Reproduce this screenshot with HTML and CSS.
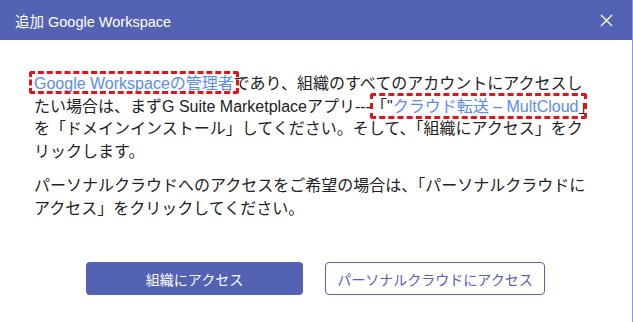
FILE: index.html
```html
<!DOCTYPE html>
<html lang="ja">
<head>
    <meta charset="UTF-8">
    <meta name="viewport" content="width=device-width, initial-scale=1.0">
    <title>追加 Google Workspace</title>
    <link rel="stylesheet" href="styles.css">
</head>
<body>
    <!-- Add Google Workspace dialog -->
    <div class="dialog">
        <div class="dialog-header">
            <span class="dialog-title">追加 Google Workspace</span>
            <button class="close-btn" aria-label="閉じる">
                <svg width="13" height="13" viewBox="0 0 13 13">
                    <path d="M1 1 L12 12 M12 1 L1 12" stroke="#ffffff" stroke-width="1.4" fill="none"/>
                </svg>
            </button>
        </div>

        <div class="dialog-body">
            <p><a href="#" class="link mark mark-admin">Google Workspaceの管理者</a>であり、組織のすべてのアカウントにアクセスしたい場合は、まずG Suite Marketplaceアプリ---<span class="mark mark-app">「"<a href="#" class="link">クラウド転送 – MultCloud</a>」</span>を「ドメインインストール」してください。そして、「組織にアクセス」をクリックします。</p>
            <p class="second">パーソナルクラウドへのアクセスをご希望の場合は、「パーソナルクラウドにアクセス」をクリックしてください。</p>

            <div class="actions">
                <button class="btn btn-primary">組織にアクセス</button>
                <button class="btn btn-outline">パーソナルクラウドにアクセス</button>
            </div>
        </div>
    </div>
</body>
</html>
```

FILE: styles.css
```css
html, body {
    margin: 0;
    padding: 0;
    background-color: #ffffff;
}

body {
    font-family: "Liberation Sans", Arial, "Noto Sans CJK JP", sans-serif;
    color: #222222;
}

.dialog {
    width: 632px;
    min-height: 322px;
    border-right: 1px solid #8d96e8;
    background-color: #ffffff;
}

.dialog-header {
    height: 40px;
    display: flex;
    align-items: center;
    justify-content: space-between;
    padding: 0 19px 0 15px;
    background-color: #5462b4;
    color: #ffffff;
}

.dialog-title {
    font-size: 14.5px;
}

.close-btn {
    display: flex;
    padding: 0;
    border: none;
    background: none;
    cursor: pointer;
}

.dialog-body {
    padding: 33px 35px 0 34px;
}

.dialog-body p {
    margin: 0;
    font-size: 16px;
    line-height: 22.5px;
}

.dialog-body p.second {
    margin-top: 12px;
}

.link {
    color: #5b8cf0;
    text-decoration: none;
}

/* red dashed highlight drawn over the text */
.mark {
    position: relative;
}

.mark::after {
    content: "";
    position: absolute;
    border: 3px dashed #e3131b;
    border-radius: 3px;
    pointer-events: none;
}

.mark-admin::after {
    left: -5px;
    right: -5px;
    top: -4px;
    bottom: -2px;
}

.mark-app::after {
    left: -1px;
    right: 7px;
    top: -5px;
    bottom: -4px;
}

.actions {
    display: flex;
    justify-content: center;
    gap: 22px;
    margin-top: 42px;
}

.btn {
    height: 33px;
    border-radius: 4px;
    font-family: "Liberation Sans", Arial, "Noto Sans CJK JP", sans-serif;
    font-size: 14px;
    cursor: pointer;
}

.btn-primary {
    width: 217px;
    border: none;
    background-color: #5462b4;
    color: #ffffff;
}

.btn-outline {
    width: 220px;
    border: 1px solid #5462b4;
    background-color: #ffffff;
    color: #5462b4;
}
```
